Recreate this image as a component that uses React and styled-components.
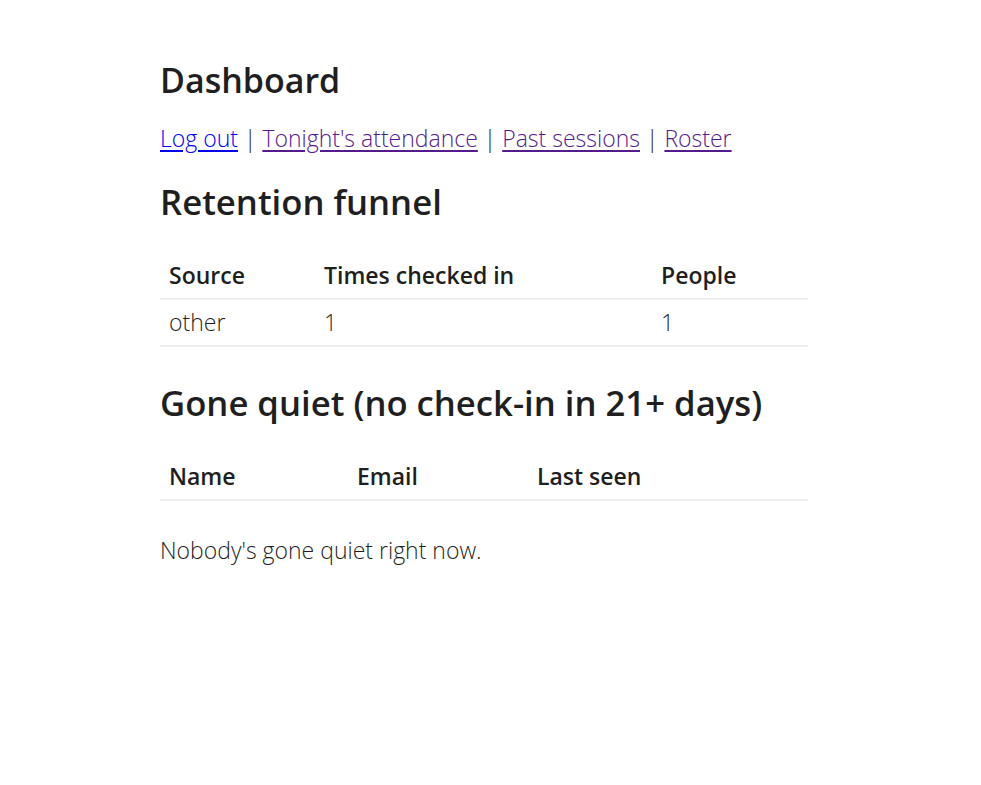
import React from 'react';
import styled, { createGlobalStyle } from 'styled-components';

const GlobalStyle = createGlobalStyle`
  body {
    margin: 0;
    background: #fff;
    color: #1f1f1f;
    font-family: "Open Sans", "Noto Sans", sans-serif;
    font-weight: 300;
    font-size: 23px;
    line-height: 30px;
  }
`;

const Page = styled.main`
  width: 648px;
  margin: 0 auto;
  padding: 56px 13px 40px 0;
`;

const Title = styled.h1`
  font-size: 34px;
  font-weight: 600;
  margin: 0 0 19px;
  line-height: 48px;
`;

const Nav = styled.nav`
  margin-bottom: 27px;
`;

const Link = styled.a`
  color: ${p => (p.$visited ? '#551a8b' : '#0000ee')};
  text-decoration: underline;
  text-underline-offset: 3px;
`;

const Heading = styled.h2`
  font-size: 34.7px;
  font-weight: 600;
  margin: 0 0 26px;
  line-height: 44px;
`;

const Table = styled.table`
  width: 100%;
  border-collapse: collapse;
  margin-bottom: 34px;
`;

const Th = styled.th`
  text-align: left;
  font-weight: 600;
  padding: 10px 9px 8px;
  border-bottom: 2px solid #eeeeee;
  width: ${p => p.$w};
`;

const Td = styled.td`
  padding: 7px 9px 8px;
  border-bottom: 2px solid #eeeeee;
`;

const Empty = styled.p`
  margin: 0;
`;

const App = () => (
  <>
    <GlobalStyle />
    <Page>
      <Title>Dashboard</Title>
      <Nav>
        <Link href="#logout">Log out</Link> |{' '}
        <Link $visited href="#tonight">Tonight's attendance</Link> |{' '}
        <Link $visited href="#past">Past sessions</Link> |{' '}
        <Link $visited href="#roster">Roster</Link>
      </Nav>

      <Heading>Retention funnel</Heading>
      <Table>
        <thead>
          <tr>
            <Th $w="137px">Source</Th>
            <Th $w="319px">Times checked in</Th>
            <Th>People</Th>
          </tr>
        </thead>
        <tbody>
          <tr>
            <Td>other</Td>
            <Td>1</Td>
            <Td>1</Td>
          </tr>
        </tbody>
      </Table>

      <Heading>Gone quiet (no check-in in 21+ days)</Heading>
      <Table>
        <thead>
          <tr>
            <Th $w="170px">Name</Th>
            <Th $w="162px">Email</Th>
            <Th>Last seen</Th>
          </tr>
        </thead>
        <tbody />
      </Table>
      <Empty>Nobody's gone quiet right now.</Empty>
    </Page>
  </>
);

export default App;
